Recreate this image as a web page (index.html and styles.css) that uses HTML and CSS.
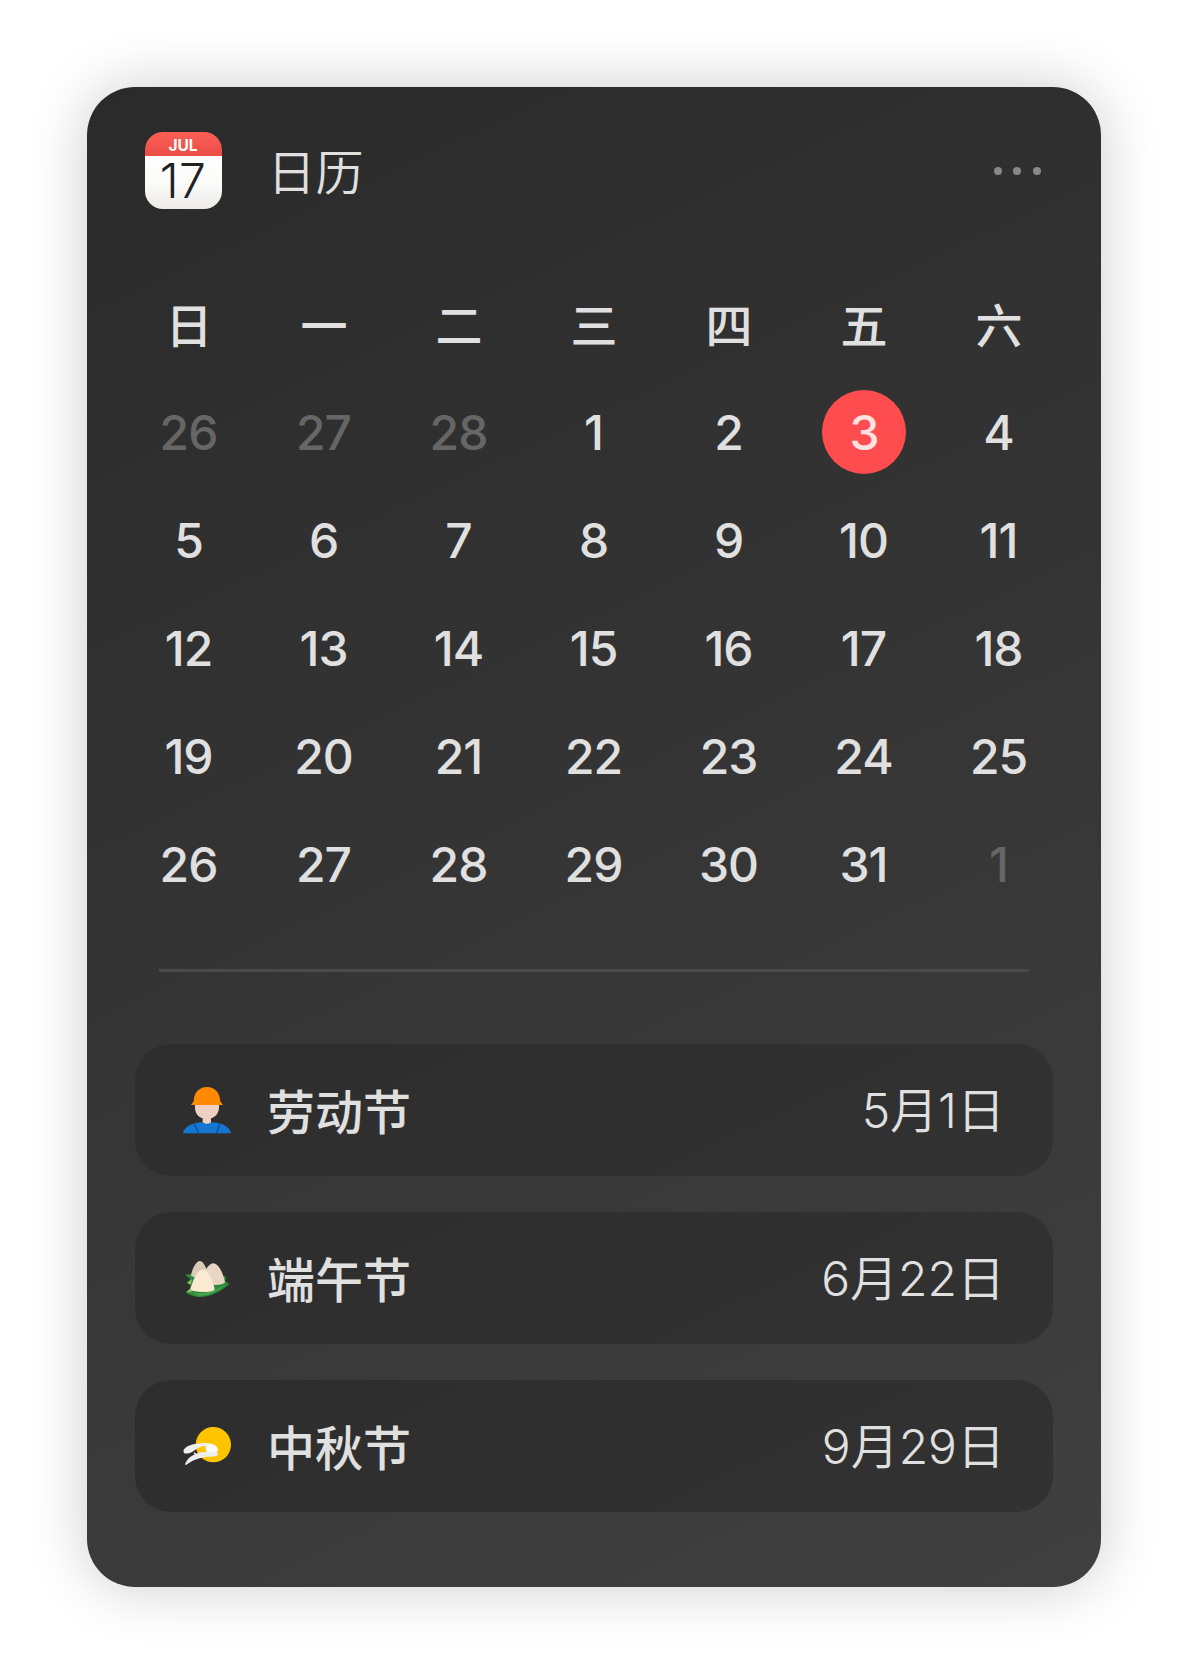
FILE: index.html
```html
<!DOCTYPE html>
<html lang="zh-CN">
<head>
<meta charset="utf-8">
<title>日历</title>
<link rel="stylesheet" href="styles.css">
</head>
<body>
<main class="card">
  <header class="header">
    <div class="app-icon"><span class="app-month">JUL</span><span class="app-day">17</span></div>
    <h1 class="title">日历</h1>
    <div class="more"><i></i><i></i><i></i></div>
  </header>
  <section class="grid">
    <span class="week">日</span><span class="week">一</span><span class="week">二</span><span class="week">三</span><span class="week">四</span><span class="week">五</span><span class="week">六</span>
    <span class="dim">26</span><span class="dim">27</span><span class="dim">28</span><span>1</span><span>2</span><span><b class="today">3</b></span><span>4</span>
    <span>5</span><span>6</span><span>7</span><span>8</span><span>9</span><span>10</span><span>11</span>
    <span>12</span><span>13</span><span>14</span><span>15</span><span>16</span><span>17</span><span>18</span>
    <span>19</span><span>20</span><span>21</span><span>22</span><span>23</span><span>24</span><span>25</span>
    <span>26</span><span>27</span><span>28</span><span>29</span><span>30</span><span>31</span><span class="dim">1</span>
  </section>
  <hr class="divider">
  <ul class="list">
    <li class="item">
      <svg class="icon" viewBox="39 48 144 144">
        <path fill="#f0cfc3" d="M75 103H147V112C147 129 137 141 123 145V156Q123 162 111 162Q98 162 98 156V145C84 141 75 129 75 112Z"/>
        <path fill="#ff8a00" d="M63 105L71 94C72 67 88 51 111 51S149 67 151 94L159 105Z"/>
        <path fill="#1277d1" d="M39 190C42 172 64 158 98 157Q111 166 124 157C158 158 180 172 183 190Z"/>
        <path fill="none" stroke="#1746b0" stroke-width="4" d="M73 161L86 190M149 161L139 190"/>
      </svg>
      <span class="name">劳动节</span><span class="date">5月1日</span>
    </li>
    <li class="item">
      <svg class="icon" viewBox="39 42 144 144">
        <path fill="#2f8b3c" d="M45 105L65 101L165 108L169 115L164 122L178 132C160 148 125 173 84 171Q60 168 48 157L58 148L62 134L51 128L62 117Z"/>
        <path fill="#8fc65a" d="M51 128L66 118L62 134ZM48 157L61 147L64 156Z"/>
        <path fill="#4aa84c" d="M60 157Q100 171 168 134Q125 168 88 167Z"/>
        <path fill="#d9cbb7" d="M63 107C66 86 79 63 89 63C100 63 111 84 114 108L90 115Q73 113 63 107Z"/>
        <path fill="#e6d6c2" d="M105 93C112 80 122 70 130 70C145 70 160 100 165 127Q157 136 132 135Z"/>
        <path fill="#fbe9d1" d="M61 151C67 119 84 89 98 89C114 89 130 120 134 149Q125 156 98 156Q72 155 61 151Z"/>
      </svg>
      <span class="name">端午节</span><span class="date">6月22日</span>
    </li>
    <li class="item">
      <svg class="icon" viewBox="39 51 144 144">
        <circle cx="130" cy="119" r="53" fill="#ffc400"/>
        <path fill="#eee" d="M40 138C43 123 72 115 100 114C126 112 145 121 144 135L141 142L144 150Q137 156 115 155C87 157 66 166 48 180Q43 179 47 173C53 160 63 153 75 148L71 146L73 142L79 146C88 141 98 141 112 141C106 136 106 127 108 122C94 122 83 129 72 137C60 145 47 148 42 144Z"/>
        <path fill="#fafafa" d="M108 122C122 114 140 121 142 134C139 143 124 146 112 141C107 136 106 127 108 122Z"/>
      </svg>
      <span class="name">中秋节</span><span class="date">9月29日</span>
    </li>
  </ul>
</main>
</body>
</html>
```
FILE: styles.css
```css
* { box-sizing: border-box; }
body {
  margin: 0;
  padding: 87px;
  background: #fff;
  font-family: Inter, "Noto Sans CJK SC", sans-serif;
  font-size: 48px;
  line-height: 60px;
  color: #e0e0e0;
}
.card {
  width: 1014px;
  height: 1500px;
  border-radius: 48px;
  background: linear-gradient(155deg, #2a2a2a, #404040);
  box-shadow: 0 0 60px rgba(0, 0, 0, .2);
}
.header {
  display: flex;
  align-items: center;
  height: 168px;
  padding: 0 60px 0 57.5px;
}
.app-icon {
  width: 77px;
  height: 77px;
  margin-bottom: 1px;
  border-radius: 18px;
  overflow: hidden;
  display: flex;
  flex-direction: column;
  align-items: center;
  background: linear-gradient(#fd5f57, #e84e46 24.5px, #fff 24.5px, #fbfbfa 50px, #eeece8);
}
.app-month {
  font-size: 15.5px;
  line-height: 27px;
  height: 24px;
  font-weight: 700;
  color: #fff;
}
.app-day {
  font-size: 48px;
  line-height: 49px;
  font-weight: 300;
  letter-spacing: .5px;
  color: #222;
}
.title {
  margin: 4px 0 0 46px;
  font-size: 48px;
  font-weight: 350;
}
.more {
  display: flex;
  gap: 11.7px;
  margin-left: auto;
}
.more i {
  width: 8px;
  height: 8px;
  border-radius: 50%;
  background: #888;
}
.grid {
  display: grid;
  grid-template-columns: repeat(7, 135px);
  grid-auto-rows: 108px;
  justify-content: center;
  margin: 16px 0 50px;
  font-weight: 500;
  letter-spacing: -1px;
}
.grid > span {
  display: flex;
  align-items: center;
  justify-content: center;
  padding-right: 1px;
}
.grid > .week {
  padding: 1px 0 0;
  font-size: 47px;
  letter-spacing: 0;
}
.dim { color: #666; }
.today {
  width: 84px;
  height: 84px;
  margin: -2px -1px 0 0;
  border-radius: 50%;
  background: #ff4d4f;
  color: #ffe2e2;
  font-weight: 500;
  line-height: 86px;
  text-align: center;
}
.divider {
  height: 3px;
  margin: 0 72px 72px;
  border: 0;
  background: #4b4b4b;
}
.list {
  display: flex;
  flex-direction: column;
  gap: 36px;
  margin: 0 48px;
  padding: 0;
  list-style: none;
}
.item {
  display: flex;
  align-items: center;
  height: 132px;
  padding: 0 48px;
  border-radius: 36px;
  background: linear-gradient(155deg, #2d2d2d, #323232);
}
.icon {
  width: 48px;
  height: 48px;
  margin-right: 36px;
}
.name { padding-top: 5px; font-weight: 500; }
.date { margin-left: auto; padding-top: 2px; font-weight: 350; }
```
